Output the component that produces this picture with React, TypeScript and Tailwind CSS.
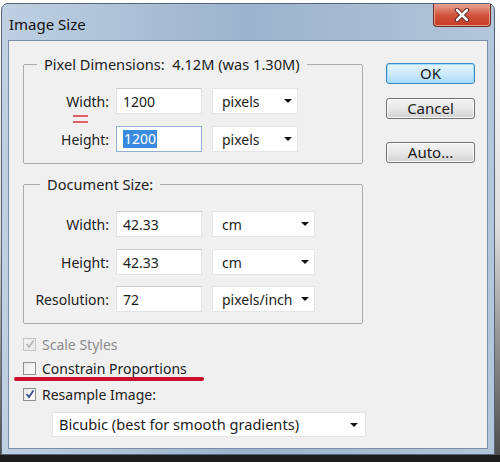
import React from "react";

const font = { fontFamily: '"Noto Sans", "Open Sans", sans-serif' };

function Arrow() {
  return (
    <svg width="8" height="4" viewBox="0 0 8 4" className="shrink-0">
      <path d="M0 0 L8 0 L4 4 Z" fill="#111" />
    </svg>
  );
}

function TextBox({ value, focused }: { value: string; focused?: boolean }) {
  return (
    <div
      className={
        "ml-[7px] flex h-[26px] w-[86px] items-center bg-white pl-[6px] text-[14px] text-[#1c1c1c] border " +
        (focused
          ? "border-[#8fb2d6]"
          : "border-[#e2e3e6] border-t-[#c9cbd0]")
      }
    >
      {focused ? (
        <span className="bg-[#3a8be0] px-[1px] leading-[18px] text-white">{value}</span>
      ) : (
        value
      )}
    </div>
  );
}

function Combo({ value, w }: { value: string; w: string }) {
  return (
    <div
      className={
        "ml-[10px] flex h-[26px] items-center justify-between border border-[#e5e5e5] bg-white pl-[9px] pr-[5px] text-[14px] text-[#1c1c1c] " +
        w
      }
    >
      <span>{value}</span>
      <Arrow />
    </div>
  );
}

function Row({
  label,
  value,
  unit,
  unitW,
  focused,
  className,
  children,
}: {
  label: string;
  value: string;
  unit: string;
  unitW: string;
  focused?: boolean;
  className?: string;
  children?: React.ReactNode;
}) {
  return (
    <div className={"relative flex h-[26px] items-center " + (className ?? "")}>
      {children}
      <div className="w-[85px] text-right text-[14px] text-[#222]">{label}</div>
      <TextBox value={value} focused={focused} />
      <Combo value={unit} w={unitW} />
    </div>
  );
}

function Check({
  checked,
  disabled,
}: {
  checked: boolean;
  disabled?: boolean;
}) {
  return (
    <div
      className={
        "flex h-[13px] w-[13px] items-center justify-center border bg-gradient-to-br " +
        (disabled
          ? "border-[#c4c4c4] from-[#f4f4f4] to-[#e8e8e8]"
          : "border-[#8e8f8f] from-[#e9e9e9] to-[#fbfbfb]")
      }
    >
      {checked && (
        <svg width="10" height="10" viewBox="0 0 10 10">
          <path
            d="M1.5 5 L4 8 L8.5 1.5"
            fill="none"
            stroke={disabled ? "#b8b8b8" : "#3b4f86"}
            strokeWidth="1.8"
          />
        </svg>
      )}
    </div>
  );
}

function WinButton({ label, def }: { label: string; def?: boolean }) {
  return (
    <div
      className={
        "flex h-[21px] w-[89px] items-center justify-center rounded-[3px] border text-[15px] text-[#1a1a1a] " +
        (def
          ? "border-[#3c8ac4] bg-gradient-to-b from-[#e6f5fc] via-[#cdebfa] to-[#a9dbf6] shadow-[inset_0_0_0_1px_#9fdcf7]"
          : "border-[#707070] bg-gradient-to-b from-[#f3f3f3] via-[#e8e8e8] to-[#d2d2d2] shadow-[inset_0_0_0_1px_#fcfcfc]")
      }
    >
      {label}
    </div>
  );
}

export default function App() {
  return (
    <div
      className="flex h-[462px] w-[500px] flex-col overflow-hidden bg-gradient-to-b from-white via-[#dcdcdc] to-[#4a4a4a]"
      style={font}
    >
      <div className="ml-[1px] mt-[3px] flex h-[452px] w-[494px] flex-col rounded-t-[7px] border border-[#56657a] bg-gradient-to-r from-[#bfd0e2] via-[#9bb3cd] to-[#b3c6da]">
        {/* title bar */}
        <div className="flex h-[36px] items-start justify-between">
          <div className="pl-[7px] pt-[10px] text-[15px] leading-[20px] text-[#111]">
            Image Size
          </div>
          <div className="mr-[3px] flex h-[23px] w-[58px] items-center justify-center rounded-b-[4px] border border-t-0 border-[#6b2a22] bg-gradient-to-b from-[#e6a395] via-[#d2533d] to-[#c23b22] shadow-[inset_0_0_0_1px_#eb9d8d]">
            <svg width="16" height="14" viewBox="0 0 16 14">
              <path
                d="M3 2 L13 12 M13 2 L3 12"
                stroke="#4a1a14"
                strokeWidth="4.4"
                strokeLinecap="round"
              />
              <path
                d="M3 2 L13 12 M13 2 L3 12"
                stroke="#fff"
                strokeWidth="2.6"
                strokeLinecap="round"
              />
            </svg>
          </div>
        </div>

        {/* client area */}
        <div className="mx-[6px] flex h-[409px] border border-[#7a8ea5] bg-[#f0f0f0]">
          <div className="flex w-[354px] flex-col pl-[14px] pt-[14px]">
            <fieldset className="w-[340px] rounded-[2px] border border-[#ababab] pb-[11px] pt-[15px]">
              <legend className="ml-[13px] px-[7px] text-[14.6px] leading-[18px] text-[#222]">
                Pixel Dimensions:&nbsp; 4.12M (was 1.30M)
              </legend>
              <Row label="Width:" value="1200" unit="pixels" unitW="w-[86px]" />
              <Row
                label="Height:"
                value="1200"
                unit="pixels"
                unitW="w-[86px]"
                focused
                className="mt-[12px]"
              >
                <div className="absolute left-[49px] top-[-11px] flex w-[15px] flex-col gap-[4px]">
                  <div className="h-[2px] bg-[#e0606c]" />
                  <div className="h-[2px] bg-[#e0606c]" />
                </div>
              </Row>
            </fieldset>

            <fieldset className="mt-[11px] w-[340px] rounded-[2px] border border-[#ababab] pb-[11px] pt-[18px]">
              <legend className="ml-[16px] px-[7px] text-[14.6px] leading-[18px] text-[#222]">
                Document Size:
              </legend>
              <Row label="Width:" value="42.33" unit="cm" unitW="w-[103px]" />
              <Row
                label="Height:"
                value="42.33"
                unit="cm"
                unitW="w-[103px]"
                className="mt-[12px]"
              />
              <Row
                label="Resolution:"
                value="72"
                unit="pixels/inch"
                unitW="w-[103px]"
                className="mt-[11px]"
              />
            </fieldset>

            <div className="mt-[8px] flex h-[24px] items-center gap-[6px] text-[14px] text-[#8c8c8c]">
              <Check checked disabled />
              <span>Scale Styles</span>
            </div>
            <div className="relative flex h-[24px] items-center gap-[6px] text-[14px] text-[#222]">
              <Check checked={false} />
              <span>Constrain Proportions</span>
              <div className="absolute left-[-9px] top-[21px] h-[4px] w-[190px] rounded-full bg-[#c8102e]" />
            </div>
            <div className="mt-[2px] flex h-[24px] items-center gap-[6px] text-[14px] text-[#222]">
              <Check checked />
              <span>Resample Image:</span>
            </div>
            <div className="ml-[29px] mt-[6px] flex h-[25px] w-[314px] items-center justify-between border border-[#e5e5e5] bg-white pl-[6px] pr-[7px] text-[14.6px] text-[#1c1c1c]">
              <span>Bicubic (best for smooth gradients)</span>
              <Arrow />
            </div>
          </div>

          <div className="ml-[23px] flex flex-col pt-[22px]">
            <WinButton label="OK" def />
            <div className="mt-[14px]">
              <WinButton label="Cancel" />
            </div>
            <div className="mt-[23px]">
              <WinButton label="Auto..." />
            </div>
          </div>
        </div>
      </div>
      <div className="flex-1 bg-[#1d1d1d]" />
    </div>
  );
}
